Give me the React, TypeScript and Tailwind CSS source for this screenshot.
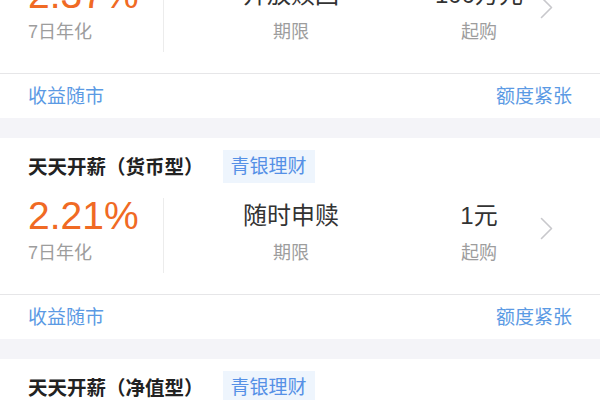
import React from "react";

interface Product {
  name: string;
  issuer: string;
  rate: string;
  term: string;
  minBuy: string;
}

const products: Product[] = [
  { name: "天天开薪（货币型）", issuer: "青银理财", rate: "2.37%", term: "开放赎回", minBuy: "100万元" },
  { name: "天天开薪（货币型）", issuer: "青银理财", rate: "2.21%", term: "随时申赎", minBuy: "1元" },
  { name: "天天开薪（净值型）", issuer: "青银理财", rate: "2.05%", term: "随时申赎", minBuy: "1元" },
];

function Chevron() {
  return (
    <svg width="13" height="23" viewBox="0 0 13 23" fill="none" className="shrink-0 mt-[19px]">
      <polyline points="1.5,1.5 11.5,11.5 1.5,21.5" stroke="#c8c8cc" strokeWidth="1.6" strokeLinecap="round" strokeLinejoin="round" />
    </svg>
  );
}

function ProductCard({ p }: { p: Product }) {
  return (
    <div className="bg-white">
      <div className="pt-[12px] pb-[21px]">
        {/* Header */}
        <div className="flex items-center h-[33px] pl-[28px]">
          <span className="text-[19.5px] leading-[20px] font-semibold text-[#222]">{p.name}</span>
          <span className="ml-[19px] h-[33px] px-[8px] flex items-center bg-[#eef5fd] text-[#5590e6] text-[19px] leading-[19px]">
            {p.issuer}
          </span>
        </div>

        {/* Figures */}
        <div className="flex items-start mt-[15px] h-[75px] pl-[28px]">
          <div className="w-[135px] h-full">
            <div className="-mt-[2px] text-[39px] leading-[39px] text-[#f06a24]">{p.rate}</div>
            <div className="mt-[9px] text-[18px] leading-[18px] text-[#9d9d9d]">7日年化</div>
          </div>
          <div className="w-px h-full bg-[#ececec]" />
          <div className="w-[254px] flex flex-col items-center">
            <div className="mt-[6px] text-[24px] leading-[24px] text-[#333]">{p.term}</div>
            <div className="mt-[16px] text-[18px] leading-[18px] text-[#9d9d9d]">期限</div>
          </div>
          <div className="w-[122px] flex flex-col items-center">
            <div className="mt-[6px] text-[24px] leading-[24px] text-[#333]">{p.minBuy}</div>
            <div className="mt-[16px] text-[18px] leading-[18px] text-[#9d9d9d]">起购</div>
          </div>
          <Chevron />
        </div>
      </div>

      {/* Footer */}
      <div className="h-[45px] border-t border-[#e6e6e8] flex items-center justify-between px-[28px] text-[19px] leading-[19px] text-[#5b9ae4]">
        <span>收益随市</span>
        <span>额度紧张</span>
      </div>
    </div>
  );
}

export default function App() {
  return (
    <div className="w-full h-[400px] overflow-hidden bg-[#f4f4f8] font-['Liberation_Sans','Noto_Sans_CJK_SC',sans-serif]">
      <div className="-mt-[83px] flex flex-col gap-[20px]">
        {products.map((p, i) => (
          <ProductCard key={i} p={p} />
        ))}
      </div>
    </div>
  );
}
